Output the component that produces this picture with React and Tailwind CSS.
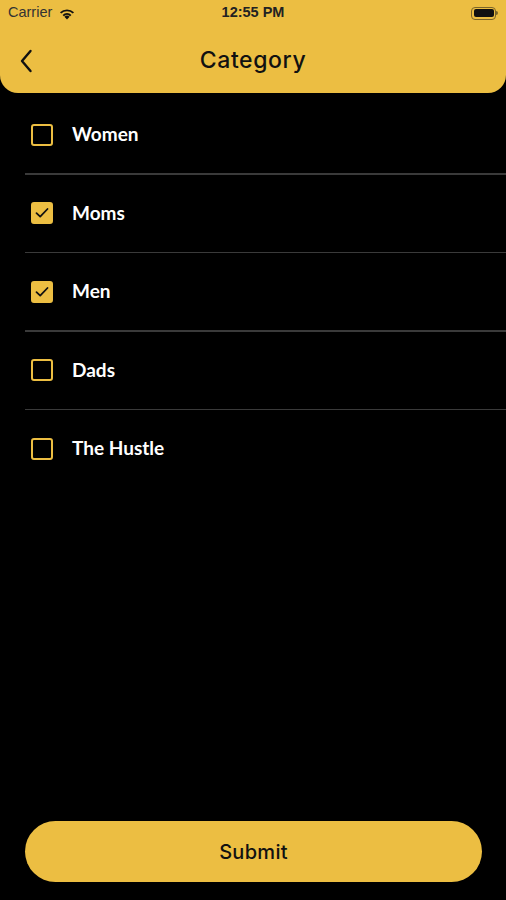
import React, { useState } from "react";

const items = [
  { label: "Women", checked: false },
  { label: "Moms", checked: true },
  { label: "Men", checked: true },
  { label: "Dads", checked: false },
  { label: "The Hustle", checked: false },
];

const Wifi = () => (
  <svg width="18" height="13" viewBox="0 0 16 12" fill="#111">
    <path d="M8 11.5 L5.6 9 A3.4 3.4 0 0 1 10.4 9 Z" />
    <path d="M3.9 7.3 A5.9 5.9 0 0 1 12.1 7.3 L10.9 8.5 A4.2 4.2 0 0 0 5.1 8.5 Z" />
    <path d="M1.5 4.9 A9.3 9.3 0 0 1 14.5 4.9 L13.3 6.1 A7.6 7.6 0 0 0 2.7 6.1 Z" />
  </svg>
);

const Battery = () => (
  <div className="flex items-center">
    <div className="w-[25px] h-[13px] rounded-[4px] border border-[#7a6529] p-[1.5px]">
      <div className="w-full h-full rounded-[2px] bg-[#111]" />
    </div>
    <div className="w-[2px] h-[4px] rounded-r bg-[#7a6529]" />
  </div>
);

const Check = ({ checked }) => (
  <div
    className={`w-[22px] h-[22px] rounded-[3px] border-[2.5px] border-[#ecbe42] flex items-center justify-center ${
      checked ? "bg-[#ecbe42]" : ""
    }`}
  >
    {checked && (
      <svg width="16" height="16" viewBox="0 0 16 16" fill="none">
        <path d="M2.5 8.2 L6.2 11.6 L13.5 4" stroke="#111" strokeWidth="1.8" strokeLinecap="round" strokeLinejoin="round" />
      </svg>
    )}
  </div>
);

export default function App() {
  const [list, setList] = useState(items);
  return (
    <div className="w-[506px] h-[900px] bg-black flex flex-col font-['Lato','Liberation_Sans',sans-serif]">
      <div className="bg-[#ecbe42] rounded-b-[18px] h-[93px] flex flex-col">
        <div className="h-[26px] flex items-center justify-between px-[8px] relative">
          <div className="flex items-center gap-[6px] text-[14.5px] text-[#333] font-['Liberation_Sans',sans-serif]">
            <span>Carrier</span>
            <Wifi />
          </div>
          <span className="absolute left-0 right-0 text-center text-[14.5px] font-semibold text-[#222] font-['Liberation_Sans',sans-serif]">
            12:55 PM
          </span>
          <Battery />
        </div>
        <div className="flex-1 flex items-center relative pt-[2px]">
          <svg className="absolute left-[18px]" width="16" height="26" viewBox="0 0 16 26" fill="none">
            <path d="M12.5 3 L4 13 L12.5 23" stroke="#111" strokeWidth="2.4" strokeLinecap="round" strokeLinejoin="round" />
          </svg>
          <span className="w-full text-center text-[23px] font-medium text-[#111] tracking-[0.6px] font-['Inter','Lato',sans-serif]">
            Category
          </span>
        </div>
      </div>
      <div className="flex flex-col pt-[3px]">
        {list.map((it, i) => (
          <div key={it.label} className="flex flex-col">
            <div
              className="h-[77px] flex items-center gap-[19px] pl-[31px] cursor-pointer"
              onClick={() =>
                setList(list.map((x, j) => (j === i ? { ...x, checked: !x.checked } : x)))
              }
            >
              <Check checked={it.checked} />
              <span className="text-white text-[19px] font-bold">{it.label}</span>
            </div>
            {i < list.length - 1 && <div className="ml-[25px] h-[1.5px] bg-[#3a3a3a]" />}
          </div>
        ))}
      </div>
      <div className="flex-1" />
      <div className="px-[25px] pb-[18px] pr-[24px]">
        <button className="w-[457px] h-[61px] rounded-full bg-[#ecbe42] text-[20px] font-medium text-[#111] tracking-[0.3px] font-['Inter','Lato',sans-serif]">
          Submit
        </button>
      </div>
    </div>
  );
}
